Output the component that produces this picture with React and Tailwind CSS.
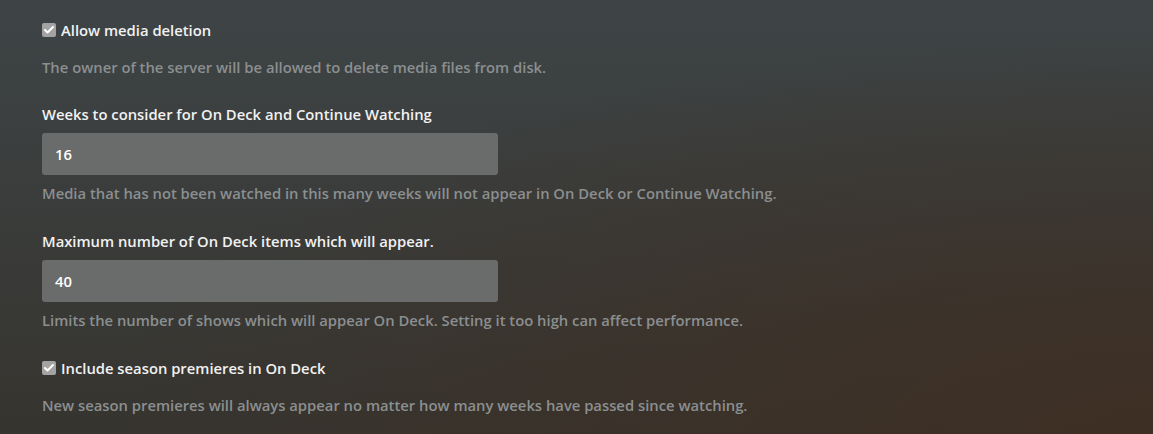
import { Check } from 'lucide-react';

function Checkbox({ label }) {
  return (
    <label className="flex items-center h-5 text-[14.8px] font-semibold text-[#f1f1f1]">
      <span className="w-[14px] h-[14px] rounded-[2px] bg-[#a3a3a3] flex items-center justify-center mr-[5px]">
        <Check className="w-[12px] h-[12px] text-white" strokeWidth={4} />
      </span>
      {label}
    </label>
  );
}

function Help({ children }) {
  return <p className="h-5 leading-5 text-[14.8px] font-semibold text-[#8b8f90]">{children}</p>;
}

function NumberField({ label, value, help }) {
  return (
    <div>
      <div className="h-5 leading-5 text-[14.8px] font-semibold text-[#f1f1f1]">{label}</div>
      <div className="mt-[9px] w-[456px] h-[42px] rounded-[3px] bg-[#6a6c6b] flex items-center px-[13px] text-[14.8px] font-semibold text-white">
        {value}
      </div>
      <div className="mt-[8px]">
        <Help>{help}</Help>
      </div>
    </div>
  );
}

export default function App() {
  return (
    <div
      className="w-[1153px] h-[434px] overflow-hidden bg-[radial-gradient(ellipse_at_bottom_right,#3e2f24_0%,transparent_65%),linear-gradient(to_bottom,#3e4446,#36342f)] px-[42px] pt-[20px]"
      style={{ fontFamily: '"Open Sans", "Noto Sans", sans-serif' }}
    >
      <div className="flex flex-col gap-[27px]">
        <div className="flex flex-col gap-[17px]">
          <Checkbox label="Allow media deletion" />
          <Help>The owner of the server will be allowed to delete media files from disk.</Help>
        </div>
        <NumberField
          label="Weeks to consider for On Deck and Continue Watching"
          value="16"
          help="Media that has not been watched in this many weeks will not appear in On Deck or Continue Watching."
        />
        <div className="mt-[1px]">
          <NumberField
            label="Maximum number of On Deck items which will appear."
            value="40"
            help="Limits the number of shows which will appear On Deck. Setting it too high can affect performance."
          />
        </div>
        <div className="flex flex-col gap-[17px] mt-[1px]">
          <Checkbox label="Include season premieres in On Deck" />
          <Help>New season premieres will always appear no matter how many weeks have passed since watching.</Help>
        </div>
      </div>
    </div>
  );
}
